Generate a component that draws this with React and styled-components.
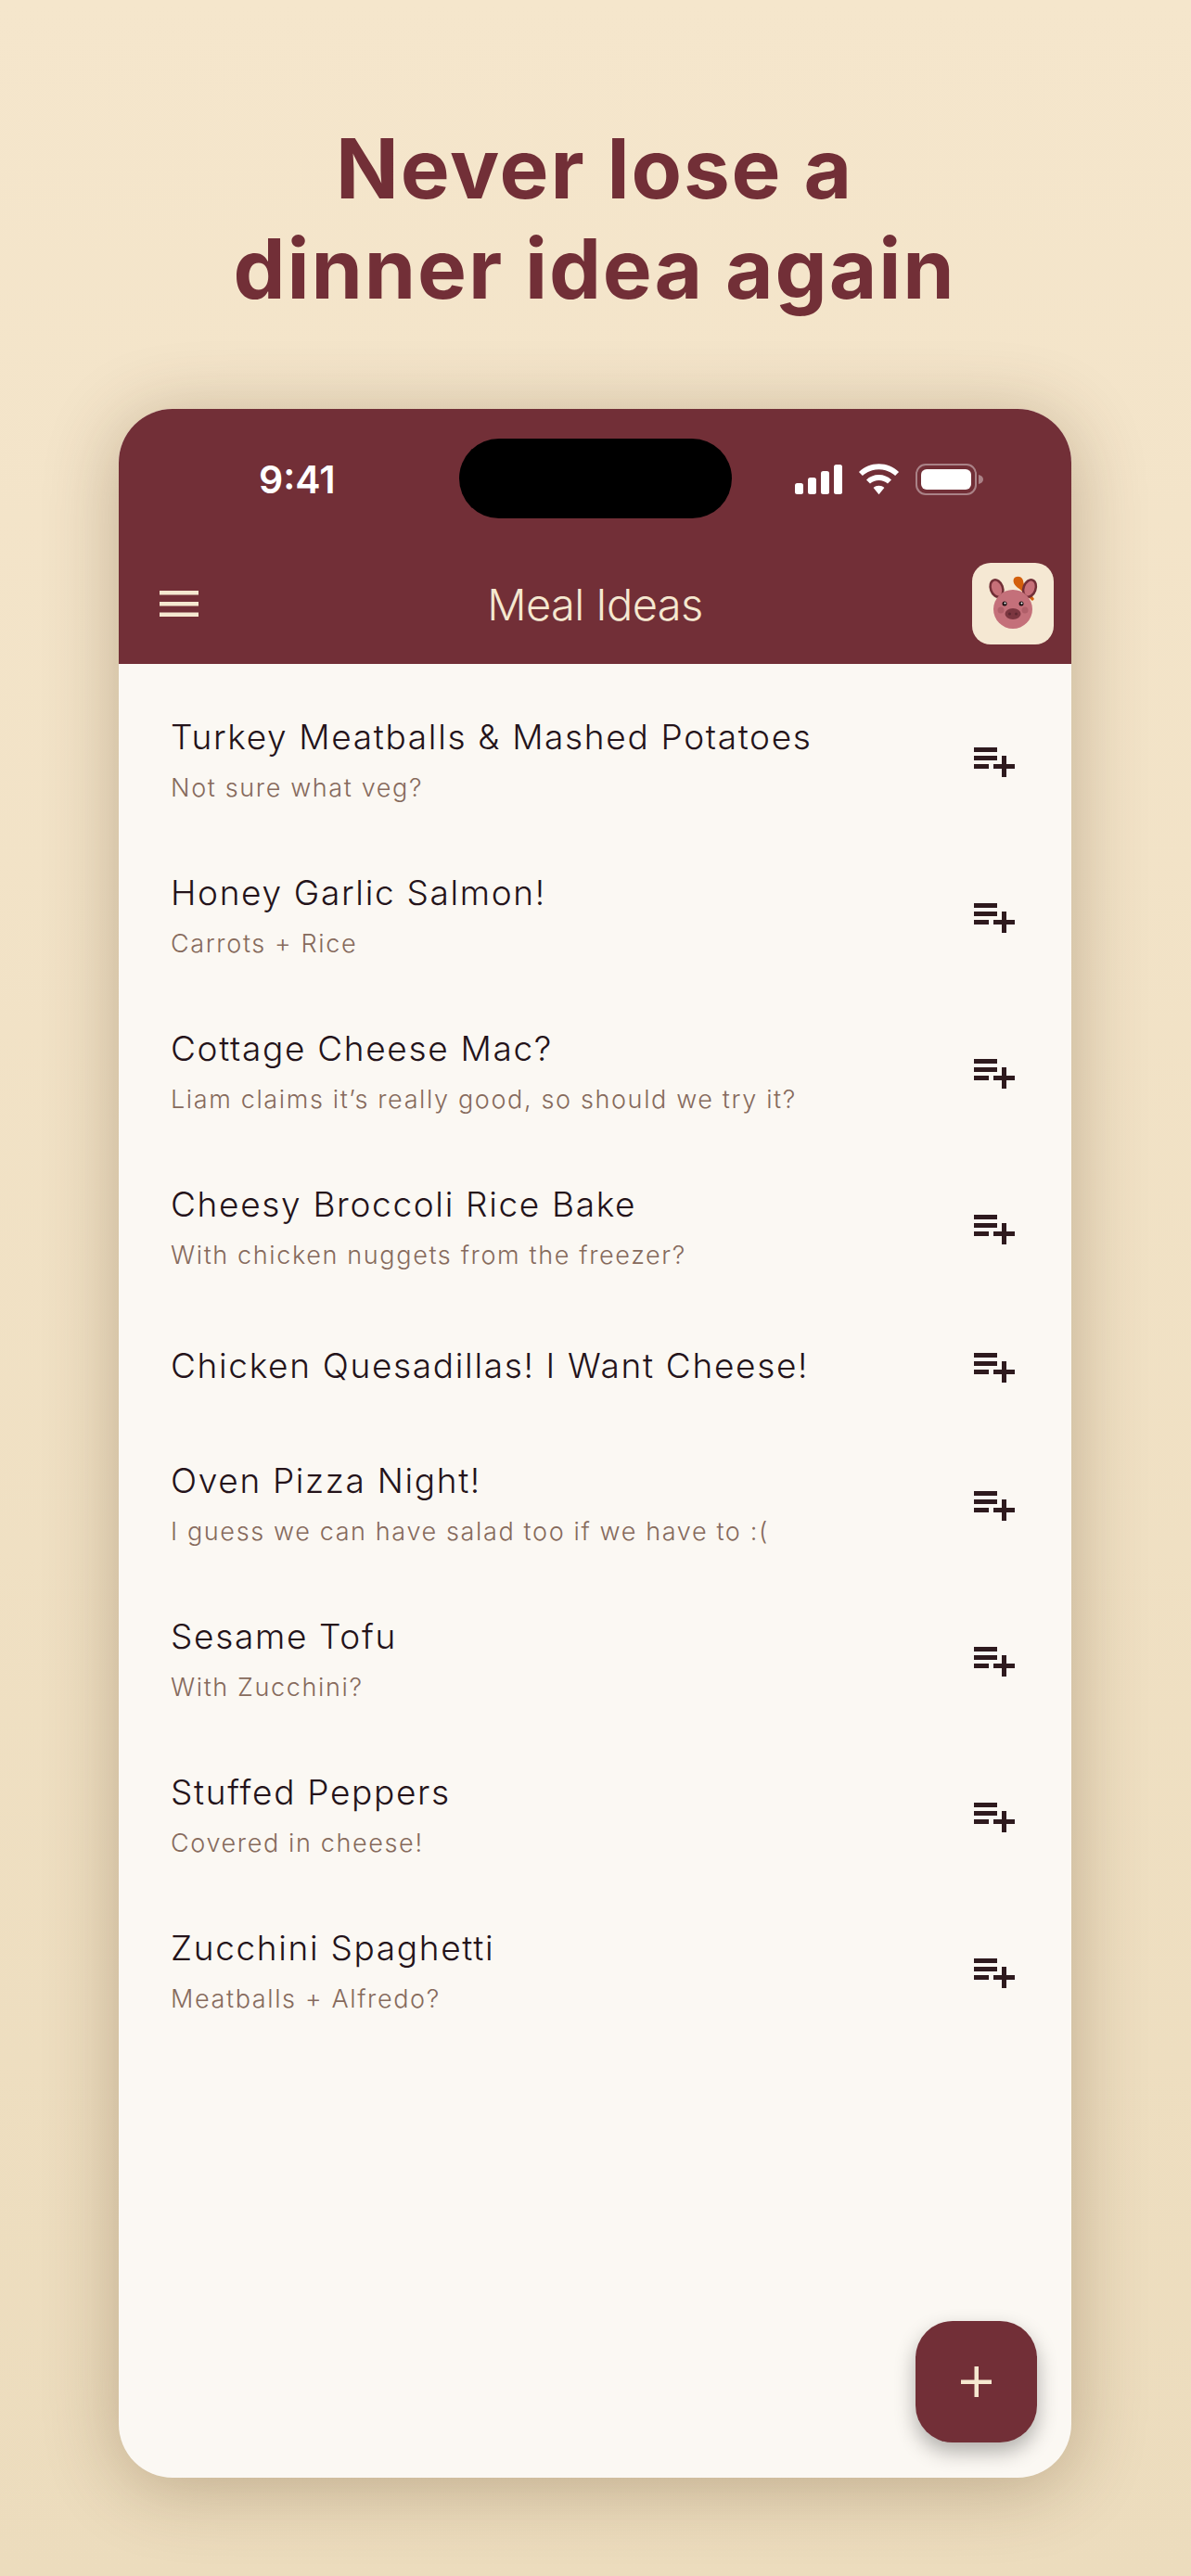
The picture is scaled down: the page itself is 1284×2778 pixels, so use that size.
import React from 'react';
import styled, { createGlobalStyle } from 'styled-components';

const GlobalStyle = createGlobalStyle`
  html, body {
    margin: 0;
    padding: 0;
  }
  body {
    font-family: Inter, 'Liberation Sans', sans-serif;
  }
`;

const Page = styled.div`
  width: 1284px;
  height: 2778px;
  box-sizing: border-box;
  padding-top: 128px;
  background: linear-gradient(180deg, #f5e6cc 0%, #ecdcbd 100%);
  overflow: hidden;
`;

const Headline = styled.h1`
  margin: 0 0 97px;
  padding-right: 2px;
  text-align: center;
  font-size: 89px;
  line-height: 108px;
  font-weight: 700;
  letter-spacing: 1.85px;
  color: #722f37;
`;

const Phone = styled.div`
  width: 1027px;
  height: 2231px;
  margin: 0 0 0 128px;
  display: flex;
  flex-direction: column;
  position: relative;
  border-radius: 58px;
  background: #fbf8f3;
  box-shadow: 0 10px 80px rgba(80, 50, 20, 0.3);
  overflow: hidden;
`;

const Header = styled.header`
  background: #722f37;
  height: 275px;
  flex-shrink: 0;
  display: flex;
  flex-direction: column;
`;

const StatusBar = styled.div`
  height: 150px;
  padding: 32px 95px 0;
  box-sizing: border-box;
  display: grid;
  grid-template-columns: 1fr 294px 1fr;
  align-items: start;
`;

const Clock = styled.span`
  padding-left: 56px;
  font-size: 41px;
  font-weight: 600;
  line-height: 88px;
  color: #fff;
`;

const Island = styled.div`
  height: 86px;
  border-radius: 43px;
  background: #000;
`;

const StatusIcons = styled.div`
  display: flex;
  align-items: center;
  justify-content: flex-end;
  gap: 17px;
  height: 88px;
`;

const AppBar = styled.div`
  flex: 1;
  display: flex;
  align-items: center;
  justify-content: space-between;
  padding: 0 19px 5px 44px;
  position: relative;
`;

const Title = styled.div`
  position: absolute;
  left: 0;
  right: 0;
  text-align: center;
  font-size: 47px;
  font-weight: 300;
  letter-spacing: -0.6px;
  color: #f5e8d0;
`;

const Avatar = styled.div`
  width: 88px;
  height: 88px;
  border-radius: 20px;
  background: #f5e8d3;
  display: flex;
  align-items: center;
  justify-content: center;
`;

const List = styled.ul`
  list-style: none;
  margin: 0;
  padding: 22px 0 0;
`;

const Row = styled.li`
  display: flex;
  align-items: center;
  justify-content: space-between;
  height: ${(props) => (props.$single ? '130px' : '168px')};
  padding: 0 61px 0 56px;
`;

const RowText = styled.div`
  display: flex;
  flex-direction: column;
  gap: 17px;
  margin-bottom: 5px;
`;

const RowTitle = styled.div`
  font-size: 37px;
  line-height: 44px;
  font-weight: 365;
  letter-spacing: 1.67px;
  color: #24131a;
`;

const RowSub = styled.div`
  font-size: 27px;
  line-height: 32px;
  font-weight: 300;
  letter-spacing: 1.63px;
  color: #866a5c;
`;

const Fab = styled.button`
  position: absolute;
  right: 37px;
  bottom: 38px;
  width: 131px;
  height: 131px;
  padding: 0;
  border: 0;
  border-radius: 40px;
  background: #722f37;
  display: flex;
  align-items: center;
  justify-content: center;
  box-shadow: 0 10px 22px rgba(0, 0, 0, 0.3);
`;

const meals = [
  { title: 'Turkey Meatballs & Mashed Potatoes', sub: 'Not sure what veg?' },
  { title: 'Honey Garlic Salmon!', sub: 'Carrots + Rice' },
  { title: 'Cottage Cheese Mac?', sub: 'Liam claims it’s really good, so should we try it?' },
  { title: 'Cheesy Broccoli Rice Bake', sub: 'With chicken nuggets from the freezer?' },
  { title: 'Chicken Quesadillas! I Want Cheese!' },
  { title: 'Oven Pizza Night!', sub: 'I guess we can have salad too if we have to :(' },
  { title: 'Sesame Tofu', sub: 'With Zucchini?' },
  { title: 'Stuffed Peppers', sub: 'Covered in cheese!' },
  { title: 'Zucchini Spaghetti', sub: 'Meatballs + Alfredo?' },
];

const SignalIcon = () => (
  <svg width="51" height="32" viewBox="0 0 51 32" fill="#fff">
    <rect x="0" y="20" width="9" height="12" rx="2.5" />
    <rect x="14" y="14" width="9" height="18" rx="2.5" />
    <rect x="28" y="7" width="9" height="25" rx="2.5" />
    <rect x="42" y="0" width="9" height="32" rx="2.5" />
  </svg>
);

const WifiIcon = () => (
  <svg width="45" height="34" viewBox="0 0 46 34" fill="#fff">
    <path d="M23 0C14.5 0 6.8 3.3 1 8.7l4 4.3C9.7 8.6 16 6 23 6s13.3 2.6 18 7l4-4.3C39.2 3.3 31.5 0 23 0z" />
    <path d="M23 12c-5.3 0-10.100 2-13.800 5.400l4.100 4.300C15.900 19.400 19.300 18 23 18s7.100 1.400 9.700 3.700l4.100-4.300C33.100 14 28.300 12 23 12z" />
    <path d="M23 24c-2.300 0-4.400.9-6 2.300l6 7.200 6-7.200c-1.600-1.400-3.700-2.300-6-2.300z" />
  </svg>
);

const BatteryIcon = () => (
  <svg width="73" height="34" viewBox="0 0 73 34">
    <rect x="1" y="1" width="64" height="32" rx="10" fill="none" stroke="#fff" strokeOpacity="0.4" strokeWidth="2" />
    <rect x="6" y="6" width="54" height="22" rx="6" fill="#fff" />
    <path d="M68 12c3 .5 5 2.500 5 5s-2 4.500-5 5z" fill="#fff" fillOpacity="0.4" />
  </svg>
);

const MenuIcon = () => (
  <svg width="42" height="28" viewBox="0 0 42 28" fill="#f5e8d0">
    <rect x="0" y="0" width="42" height="4.500" />
    <rect x="0" y="12" width="42" height="4.500" />
    <rect x="0" y="23.500" width="42" height="4.500" />
  </svg>
);

const PigLogo = () => (
  <svg width="64" height="60" viewBox="0 0 64 60">
    <path d="M33 3c2-3 7-3 9 0 1.500 2 1 4 2 6l11 16-2 2-14-13c-3-2-8-6-6-11z" fill="#d35f0c" />
    <ellipse cx="14.500" cy="13.500" rx="6.500" ry="9.500" transform="rotate(-20 14.500 13.500)" fill="#c77079" stroke="#722f37" strokeWidth="2.500" />
    <ellipse cx="50" cy="13.500" rx="6.500" ry="9.500" transform="rotate(20 50 13.500)" fill="#c77079" stroke="#722f37" strokeWidth="2.500" />
    <circle cx="32" cy="36" r="21" fill="#c4707a" />
    <circle cx="19" cy="37" r="3.500" fill="#b05f69" />
    <circle cx="45" cy="37" r="3.500" fill="#b05f69" />
    <ellipse cx="32" cy="41" rx="8.500" ry="6" fill="#7b3640" />
    <circle cx="28.500" cy="41" r="1.500" fill="#5e2730" />
    <circle cx="35.500" cy="41" r="1.500" fill="#5e2730" />
    <circle cx="23" cy="30" r="2.500" fill="#1c1012" />
    <circle cx="41" cy="30" r="2.500" fill="#1c1012" />
    <circle cx="23.500" cy="29.500" r="1" fill="#fff" />
    <circle cx="41.500" cy="29.500" r="1" fill="#fff" />
  </svg>
);

const PlaylistAddIcon = () => (
  <svg width="44" height="32" viewBox="0 0 44 32" fill="#2e1a1e">
    <rect x="0" y="0" width="25" height="5" />
    <rect x="0" y="9" width="25" height="5" />
    <rect x="0" y="18" width="16" height="5" />
    <rect x="21" y="18" width="23" height="5" />
    <rect x="30" y="9" width="5" height="23" />
  </svg>
);

const PlusIcon = () => (
  <svg width="33" height="33" viewBox="0 0 33 33" fill="#f5e8d0">
    <rect x="0" y="14.500" width="33" height="4.500" />
    <rect x="14.500" y="0" width="4.500" height="33" />
  </svg>
);

export default function App() {
  return (
    <Page>
      <GlobalStyle />
      <Headline>
        Never lose a
        <br />
        dinner idea again
      </Headline>
      <Phone>
        <Header>
          <StatusBar>
            <Clock>9:41</Clock>
            <Island />
            <StatusIcons>
              <SignalIcon />
              <WifiIcon />
              <BatteryIcon />
            </StatusIcons>
          </StatusBar>
          <AppBar>
            <MenuIcon />
            <Title>Meal Ideas</Title>
            <Avatar>
              <PigLogo />
            </Avatar>
          </AppBar>
        </Header>
        <List>
          {meals.map((meal) => (
            <Row key={meal.title} $single={!meal.sub}>
              <RowText>
                <RowTitle>{meal.title}</RowTitle>
                {meal.sub && <RowSub>{meal.sub}</RowSub>}
              </RowText>
              <PlaylistAddIcon />
            </Row>
          ))}
        </List>
        <Fab>
          <PlusIcon />
        </Fab>
      </Phone>
    </Page>
  );
}
